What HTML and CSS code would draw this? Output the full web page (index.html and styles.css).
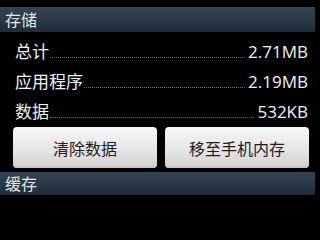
FILE: index.html
```html
<!DOCTYPE html>
<html>
<head>
<meta charset="utf-8">
<link rel="stylesheet" href="styles.css">
</head>
<body>
<div class="screen">
  <div class="section-header">存储</div>
  <div class="list">
    <div class="row"><span class="label">总计</span><span class="dots"></span><span class="value">2.71MB</span></div>
    <div class="row"><span class="label">应用程序</span><span class="dots"></span><span class="value">2.19MB</span></div>
    <div class="row"><span class="label">数据</span><span class="dots"></span><span class="value">532KB</span></div>
  </div>
  <div class="buttons">
    <button class="btn">清除数据</button>
    <button class="btn">移至手机内存</button>
  </div>
  <div class="section-header second">缓存</div>
</div>
</body>
</html>
```

FILE: styles.css
```css
html, body {
  margin: 0;
  padding: 0;
  background: #000;
}
body {
  width: 319px;
  height: 207px;
  overflow: hidden;
  font-family: "Open Sans", "Noto Sans CJK SC", sans-serif;
  color: #f0f0f0;
}
.screen {
  padding-top: 7px;
}
.section-header {
  height: 25px;
  width: 310px;
  margin-right: 4px;
  padding-left: 5px;
  box-sizing: content-box;
  background: linear-gradient(to bottom, #334352 0%, #2a3a48 50%, #1f2c38 100%);
  font-family: "Noto Sans CJK SC", sans-serif;
  font-size: 16px;
  line-height: 25px;
  color: #e6e6e6;
}
.section-header.second {
  height: 23px;
  line-height: 23px;
  margin-top: 4px;
}
.list {
  padding: 4px 11px 0 15px;
}
.row {
  height: 30px;
  display: flex;
  align-items: baseline;
  line-height: 30px;
}
.label {
  font-family: "Noto Sans CJK SC", sans-serif;
  font-size: 17px;
  color: #f2f2f2;
}
.dots {
  flex: 1;
  border-bottom: 1px dotted #6a6a6a;
  margin: 0 3px 0 1px;
}
.value {
  font-size: 17px;
  color: #f2f2f2;
}
.buttons {
  display: flex;
  gap: 8px;
  padding: 1px 10px 0 13px;
}
.btn {
  flex: 1;
  height: 41px;
  border: none;
  border-radius: 4px;
  background: linear-gradient(to bottom, #f6f6f6 0%, #e6e6e6 55%, #d4d0d0 100%);
  box-shadow: inset 0 -2px 0 #c8c4c4;
  font-family: "Noto Sans CJK SC", sans-serif;
  font-size: 16px;
  color: #1e1e1e;
  padding: 0;
}
```
